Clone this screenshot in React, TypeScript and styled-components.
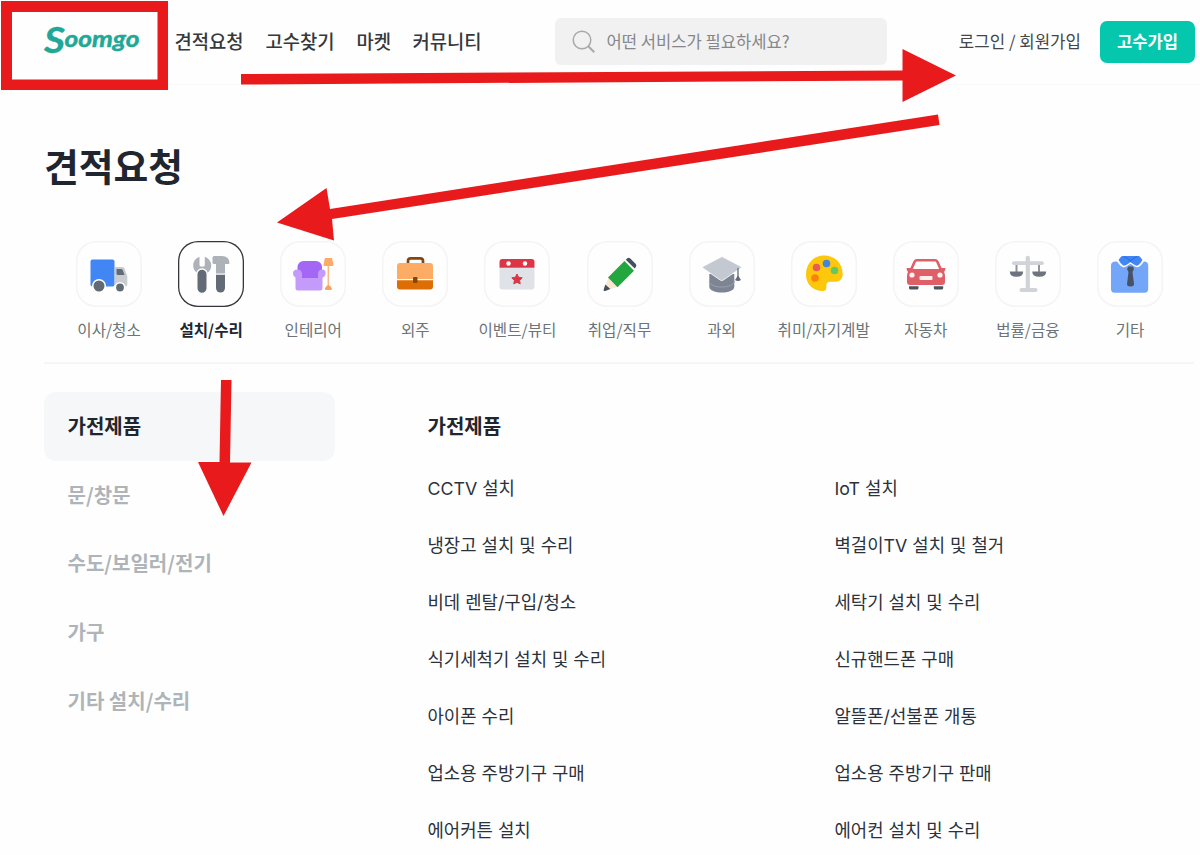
import React from "react";
import styled, { createGlobalStyle } from "styled-components";

const GlobalStyle = createGlobalStyle`
  * { box-sizing: border-box; }
  body {
    margin: 0;
    background: #fefefe;
    color: #1f2630;
    font-family: "Noto Sans CJK KR", sans-serif;
    overflow: hidden;
  }
`;

const Page = styled.div`
  position: relative;
  width: 1200px;
  height: 855px;
  overflow: hidden;
`;

const Header = styled.header`
  display: flex;
  align-items: center;
  height: 85px;
  padding: 0 5px 1px 40px;
  border-bottom: 1px solid #f9f9f9;
`;

const Logo = styled.svg`
  flex: none;
  width: 134.5px;
  height: 84px;
  font-family: Lato, sans-serif;
  font-style: italic;
  font-weight: 700;
  fill: #1fa898;
  stroke: #1fa898;
  stroke-linejoin: round;
`;

const Nav = styled.nav`
  display: flex;
  gap: 21px;
  width: 380px;
  flex: none;
  padding-bottom: 2px;
`;

const NavLink = styled.a<{ $width: number }>`
  width: ${(p) => p.$width}px;
  font-size: 18.8px;
  font-weight: 500;
  line-height: 28px;
  white-space: nowrap;
  color: #35383c;
`;

const Search = styled.div`
  display: flex;
  align-items: center;
  gap: 11px;
  width: 332px;
  height: 47px;
  flex: none;
  padding-left: 17px;
  border-radius: 6px;
  background: #f1f1f1;
`;

const Placeholder = styled.span`
  padding-bottom: 2px;
  color: #85878a;
  font-size: 16.6px;
  white-space: nowrap;
`;

const Login = styled.a`
  margin-left: auto;
  margin-right: 19px;
  padding-bottom: 2px;
  font-size: 16.8px;
  color: #44474a;
  white-space: nowrap;
`;

const JoinButton = styled.button`
  width: 95px;
  height: 42px;
  padding: 0 0 2px;
  border: 0;
  border-radius: 7px;
  background: #04c7ae;
  color: #fff;
  font: 700 16.6px "Noto Sans CJK KR", sans-serif;
`;

const Title = styled.h1`
  margin: 50px 0 0 44px;
  height: 61px;
  font-size: 37.8px;
  line-height: 60px;
  font-weight: 700;
`;

const Categories = styled.div`
  display: grid;
  grid-template-columns: repeat(11, 102.1px);
  margin: 45px 6px 0 44px;
  padding: 0 0 20px 14px;
  height: 123px;
  border-bottom: 2px solid #f5f6f6;
`;

const Category = styled.div<{ $active: boolean }>`
  display: flex;
  flex-direction: column;
  align-items: center;
  gap: 10px;
  font-size: 15.6px;
  line-height: 24px;
  white-space: nowrap;
  font-weight: ${(p) => (p.$active ? 700 : 400)};
  color: ${(p) => (p.$active ? "#1f2630" : "#6b7478")};
`;

const IconTile = styled.div<{ $active: boolean }>`
  display: flex;
  flex: none;
  width: 66px;
  height: 66px;
  border-radius: 20px;
  box-shadow: inset 0 0 0 ${(p) => (p.$active ? "1.3px #33363a" : "1.5px #f4f4f5")};
`;

const Content = styled.main`
  display: flex;
  padding: 28px 0 0 44px;
`;

const Sidebar = styled.aside`
  width: 291px;
  flex: none;
`;

const SideItem = styled.div<{ $active: boolean }>`
  display: flex;
  align-items: center;
  height: 68.7px;
  padding: 0 0 2px 23.5px;
  border-radius: 12px;
  font-size: 20px;
  font-weight: 700;
  color: ${(p) => (p.$active ? "#1f2630" : "#aeb4b8")};
  background: ${(p) => (p.$active ? "#f5f7f8" : "transparent")};
`;

const Services = styled.section`
  margin-left: 92.5px;
`;

const ServicesTitle = styled.h2`
  margin: 0;
  height: 68px;
  font-size: 20px;
  line-height: 68px;
  font-weight: 700;
`;

const ServiceGrid = styled.div`
  display: grid;
  grid-template-columns: 407px 300px;
  grid-auto-rows: 57px;
  align-items: center;
`;

const Service = styled.a`
  font-family: Inter, "Noto Sans CJK KR", sans-serif;
  font-size: 17.8px;
  line-height: 28px;
  color: #2b323b;
  white-space: nowrap;
`;

const Annotations = styled.svg`
  position: absolute;
  top: 0;
  left: 0;
  pointer-events: none;
`;

const Truck = () => (
  <>
    <path d="M39 26h7.5q1.5 0 2.2 2l2.6 7v8.5q0 2-2 2H39z" fill="#c9cdd2" />
    <path d="M40.5 28h4.5q1.3 0 1.8 1.3l1.7 4.7h-6.5q-1.5 0-1.5-1.5z" fill="#626b73" />
    <rect x="14.5" y="18.5" width="24" height="27" rx="2" fill="#4285f4" />
    <circle cx="23" cy="45" r="6.3" fill="#626b73" stroke="#fff" strokeWidth="1.6" />
    <circle cx="44" cy="46.5" r="4.7" fill="#626b73" stroke="#fff" strokeWidth="1.6" />
  </>
);

const Tools = () => (
  <>
    <path d="M21.5 15.7v8.200q0 1.600 1.600 1.600h2.100q1.600 0 1.600-1.600v-8.200q6.400 2.500 6.400 8.800 0 4.800-4 7.600v5h-10v-5q-4-2.800-4-7.600 0-6.300 6.300-8.800z" fill="#adb2b8" />
    <rect x="18.8" y="28" width="10.4" height="24.5" rx="5.2" fill="#626b76" stroke="#fff" strokeWidth="1.4" />
    <path d="M34.500 16.500q0-1.500 1.500-1.500h8q7 0 7.500 7 0 1-1 1H47v9.500h-9V23h-2q-1.500 0-1.500-1.500z" fill="#adb2b8" />
    <path d="M38 33.800h9V47a4.500 4.500 0 0 1-9 0z" fill="#626b76" />
  </>
);

const Sofa = () => (
  <>
    <rect x="17.5" y="20" width="24.5" height="24" rx="6" fill="#a366f5" />
    <path d="M17.5 28.5q4.5 0 4.5 5V37h16v-3.5q0-5 4-5t3.5 4q0 3-3 4V47q0 2.5-2.5 2.5H18q-2.5 0-2.5-2.5V36.500q-2.500-1-2.500-4 0-4 4.500-4z" fill="#c49bfa" />
    <path d="M45 17h7l1.500 6.500q0 1.500-1.500 1.500h-7q-1.500 0-1.500-1.500z" fill="#fbaa68" />
    <path d="M48.300 25v20" stroke="#fbb884" strokeWidth="1.500" />
    <path d="M46.500 45q2-1.500 3.800 0l1.600 2.500q0 1.500-1.500 1.500h-4q-1.500 0-1.500-1.500z" fill="#f9a25b" />
  </>
);

const Briefcase = () => (
  <>
    <path d="M26 23v-3q0-2.700 2.700-2.700h9.600Q41 17.300 41 20v3" fill="none" stroke="#84460f" strokeWidth="2.700" />
    <path d="M15 25q0-3 3-3h30q3 0 3 3v13H15z" fill="#fdac66" />
    <path d="M15 39.300h36v6q0 3.200-3 3.200H18q-3 0-3-3.200z" fill="#de6d04" />
    <rect x="31" y="36" width="4.500" height="6" rx="1" fill="#84460f" />
  </>
);

const Calendar = () => (
  <>
    <path d="M15.500 27h35v18.500q0 3-3 3h-29q-3 0-3-3z" fill="#dfe2e6" />
    <path d="M15.500 21q0-3 3-3h29q3 0 3 3v5.700h-35z" fill="#dc3545" />
    <circle cx="24.500" cy="22.500" r="2.200" fill="#fff" />
    <circle cx="41" cy="22.500" r="2.200" fill="#fff" />
    <path d="m33 33 1.600 3.300 3.600.5-2.600 2.500.6 3.600-3.200-1.700-3.200 1.700.6-3.600-2.600-2.500 3.600-.5z" fill="#dc3545" stroke="#dc3545" strokeWidth="1" strokeLinejoin="round" />
  </>
);

const Pencil = () => (
  <>
    <path d="m21.500 37 8.500 9-12 4q-2.300.3-1.500-1.800z" fill="#fbe6d2" />
    <path d="m18.300 43.500 5 4.500-5 2q-2.300.3-1.500-1.800z" fill="#46505c" />
    <path d="m37.500 20 9.500 9.700-16.500 16.600-9.500-9.800z" fill="#21a73e" />
    <path d="m38.800 18.700 1.500-1.500q1.500-1 3 .3l5.500 5.600q1.200 1.500 0 3L47.700 27.500z" fill="#46505c" />
  </>
);

const GraduationCap = () => (
  <>
    <path d="M20.300 33h25v12.500c0 8-25 8-25 0z" fill="#7d8493" />
    <path d="M20.300 40c0 8 25 8 25 0" fill="none" stroke="#9ba1ad" strokeWidth="1" />
    <path d="m33 15.500 19 10q1 .8 0 1.500L34 39.200q-1.300.8-2.600 0L14 27.200q-1.200-.9 0-1.700z" fill="#c3c8d1" stroke="#fff" strokeWidth=".8" />
    <path d="M49 27v9" stroke="#626a78" strokeWidth="1.300" />
    <path d="M49 34.500 52 39q-3 2-6 0z" fill="#626a78" />
  </>
);

const Palette = () => (
  <>
    <path d="M33 14.500c11 0 18.700 8 18.700 18.500 0 5-3 7.800-8.200 7.800h-4.200q-4 0-4 4v2q0 3.200-3.500 3.200C21.500 50 15 43 15 33.500 15 22.500 22.500 14.500 33 14.500z" fill="#fdc70c" />
    <circle cx="25.500" cy="26.500" r="3.800" fill="#ea5b55" />
    <circle cx="35.500" cy="22.500" r="3.800" fill="#4285dc" />
    <circle cx="43.500" cy="29.500" r="3.800" fill="#62c866" />
    <circle cx="24" cy="37" r="3.800" fill="#fd8008" />
  </>
);

const Car = () => (
  <>
    <path d="m18 29 3.500-8q.8-1.700 2.500-1.700h18q1.700 0 2.500 1.700l3.500 8" fill="none" stroke="#df5f68" strokeWidth="2.600" />
    <path d="M13.500 27h5l1 1h27l1-1h5l-.5 2.500-1 1.500q1 1.500 1 4v6q0 3-3 3H17q-3 0-3-3v-6q0-2.500 1-4l-1-1.500z" fill="#df5f68" />
    <circle cx="19" cy="34" r="2.600" fill="#fff0ee" />
    <circle cx="47" cy="34" r="2.600" fill="#fff0ee" />
    <rect x="26.500" y="35" width="13" height="4" rx="1" fill="#fff0ee" />
    <path d="M16 45.300h9.500v1.700q0 1.500-1.500 1.500h-6.500q-1.500 0-1.500-1.500zM40.800 45.300h9.400v1.700q0 1.500-1.500 1.500h-6.400q-1.500 0-1.500-1.500z" fill="#4b535b" />
  </>
);

const Scales = () => (
  <>
    <path d="M21.500 23v8M44 23v8" stroke="#8e959d" strokeWidth="2" />
    <rect x="30.700" y="14.800" width="4.200" height="34" rx="2" fill="#d0d3d8" />
    <rect x="17" y="20.300" width="31.800" height="3.700" rx="1.800" fill="#d0d3d8" />
    <rect x="24.500" y="47" width="18" height="4" rx="2" fill="#d0d3d8" />
    <path d="M14.800 30.500h13.400q0 5.300-6.700 5.300t-6.700-5.300zM37.300 30.500h13.900q0 5.300-7 5.300t-6.900-5.300z" fill="#6d747e" />
  </>
);

const Shirt = () => (
  <>
    <path d="M19 20.500h28q4.200 0 4.200 4V48q0 3.700-3.700 3.700h-30q-3.500 0-3.500-3.700V24.500q0-4 5-4z" fill="#73a6f8" />
    <path d="m21.500 19 2.500-3.300q.6-.7 1.500-.7h16q.9 0 1.500.7l2.500 3.300-5 5.500-7-1.500-7 1.500z" fill="#4285f4" />
    <path d="M20.500 19.500q3 5 6 6 1.500.5 7-3.500 5.500 4 7 3.500 3-1 6-6" fill="none" stroke="#fff" strokeWidth="1.500" strokeLinejoin="round" />
    <path d="M27 15.500q3.500 1.500 6.500 4.500 3-3 6.500-4.500" fill="none" stroke="#2c6ee8" strokeWidth="1.200" />
    <path d="M31.300 25.500h4.500L37 28l-1.500 3 1.500 12q0 2.500-3.500 2.500T30 43l1.500-12-1.500-3z" fill="#475365" />
  </>
);

const categories = [
  { label: "이사/청소", Icon: Truck },
  { label: "설치/수리", Icon: Tools },
  { label: "인테리어", Icon: Sofa },
  { label: "외주", Icon: Briefcase },
  { label: "이벤트/뷰티", Icon: Calendar },
  { label: "취업/직무", Icon: Pencil },
  { label: "과외", Icon: GraduationCap },
  { label: "취미/자기계발", Icon: Palette },
  { label: "자동차", Icon: Car },
  { label: "법률/금융", Icon: Scales },
  { label: "기타", Icon: Shirt },
];

const navLinks = [
  { label: "견적요청", width: 70 },
  { label: "고수찾기", width: 70 },
  { label: "마켓", width: 35 },
  { label: "커뮤니티", width: 70 },
];

const groups = ["가전제품", "문/창문", "수도/보일러/전기", "가구", "기타 설치/수리"];

const services = [
  "CCTV 설치",
  "IoT 설치",
  "냉장고 설치 및 수리",
  "벽걸이TV 설치 및 철거",
  "비데 렌탈/구입/청소",
  "세탁기 설치 및 수리",
  "식기세척기 설치 및 수리",
  "신규핸드폰 구매",
  "아이폰 수리",
  "알뜰폰/선불폰 개통",
  "업소용 주방기구 구매",
  "업소용 주방기구 판매",
  "에어커튼 설치",
  "에어컨 설치 및 수리",
];

export default function App() {
  return (
    <Page>
      <GlobalStyle />
      <Header>
        <Logo viewBox="0 0 134.5 84">
          <text x="4" y="53" fontSize="37" strokeWidth=".3" textLength="21" lengthAdjust="spacingAndGlyphs">S</text>
          <text x="24.500" y="47" fontSize="22.500" strokeWidth=".5" textLength="75" lengthAdjust="spacingAndGlyphs">oomgo</text>
        </Logo>
        <Nav>
          {navLinks.map((link) => (
            <NavLink key={link.label} $width={link.width}>{link.label}</NavLink>
          ))}
        </Nav>
        <Search>
          <svg width="24" height="24" viewBox="0 0 24 24" fill="none" stroke="#a9a9a9" strokeWidth="1.500">
            <circle cx="10" cy="10" r="8.800" />
            <path d="m16.300 16.300 6 6" strokeWidth="2" />
          </svg>
          <Placeholder>어떤 서비스가 필요하세요?</Placeholder>
        </Search>
        <Login>로그인 / 회원가입</Login>
        <JoinButton>고수가입</JoinButton>
      </Header>
      <Title>견적요청</Title>
      <Categories>
        {categories.map(({ label, Icon }, i) => (
          <Category key={label} $active={i === 1}>
            <IconTile $active={i === 1}>
              <svg width="66" height="66" viewBox="0 0 66 66">
                <Icon />
              </svg>
            </IconTile>
            {label}
          </Category>
        ))}
      </Categories>
      <Content>
        <Sidebar>
          {groups.map((group, i) => (
            <SideItem key={group} $active={i === 0}>{group}</SideItem>
          ))}
        </Sidebar>
        <Services>
          <ServicesTitle>가전제품</ServicesTitle>
          <ServiceGrid>
            {services.map((service) => (
              <Service key={service}>{service}</Service>
            ))}
          </ServiceGrid>
        </Services>
      </Content>
      <Annotations width="1200" height="855" viewBox="0 0 1200 855" fill="#e81a1b">
        <path fillRule="evenodd" d="M1 1h167v89H1zM12 12v67.500h145.500V12z" />
        <path d="M241 74 902.500 70.500V49L956 75.500 902.500 102V80.500L241 84.500z" />
        <path d="m938 114.500 1.500 10.500L332 219l2 21.500-57-18 49.500-34.500 3.500 21z" />
        <path d="M221 380h10.500L230 462.500h21.500L223.500 516 198 462h21.500z" />
      </Annotations>
    </Page>
  );
}
